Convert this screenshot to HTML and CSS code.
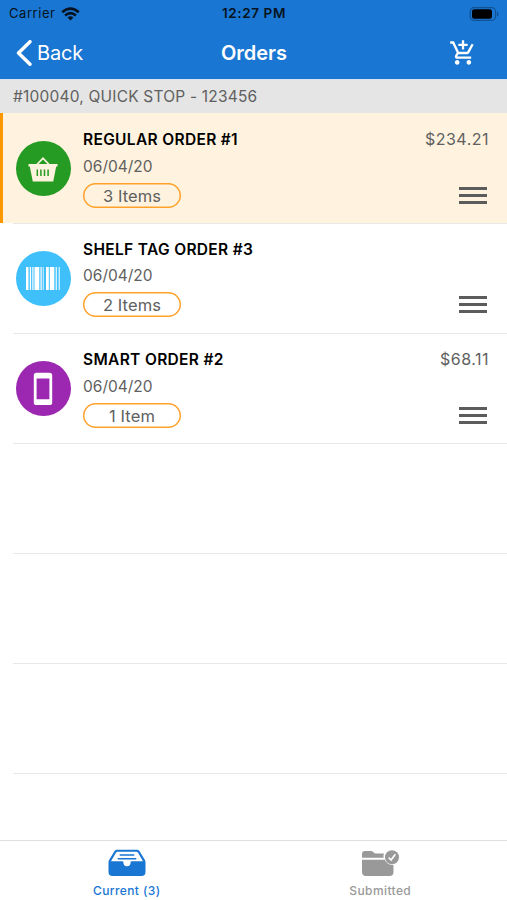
FILE: index.html
```html
<!DOCTYPE html>
<html lang="en">
<head>
<meta charset="utf-8">
<title>Orders</title>
<link rel="stylesheet" href="styles.css">
</head>
<body>
<div class="app">
  <header class="header">
    <div class="status">
      <div class="carrier"><span>Carrier</span>
        <svg class="wifi" width="19" height="14" viewBox="0 0 19 14" fill="none" stroke="#071320" stroke-width="2.6"><path d="M1.2 5.2Q9.5-1.8 17.8 5.2M4.1 8.4Q9.5 3.8 14.9 8.4"/><path d="M9.5 13.5 6.5 10.4Q9.5 8 12.5 10.4Z" fill="#071320" stroke="none"/></svg>
      </div>
      <div class="time">12:27 PM</div>
      <svg class="battery" width="30" height="14" viewBox="0 0 30 14"><rect x="1.2" y=".7" width="25.4" height="12.6" rx="3.8" fill="none" stroke="#125293" stroke-width="1.2"/><rect x="3" y="2.2" width="20" height="9.6" rx="2.4" fill="#000"/><path d="M28 4.5Q29.6 5.5 29.6 7T28 9.5Z" fill="#125293"/></svg>
    </div>
    <nav class="nav">
      <a class="back"><svg width="16" height="26" viewBox="0 0 16 26"><path d="M14 1.7 2.5 13 14 24.3" fill="none" stroke="#fff" stroke-width="3.4" stroke-linecap="round" stroke-linejoin="round"/></svg><span>Back</span></a>
      <h1 class="title">Orders</h1>
      <svg class="cart" width="28" height="28" viewBox="0 0 24 24" fill="#fff"><path d="M11 9h2V6h3V4h-3V1h-2v3H8v2h3v3zm-4 9c-1.1 0-1.99.9-1.99 2S5.9 22 7 22s2-.9 2-2-.9-2-2-2zm10 0c-1.1 0-1.99.9-1.99 2s.89 2 1.99 2 2-.9 2-2-.9-2-2-2zm-9.83-3.25l.03-.12.9-1.63h7.45c.75 0 1.41-.41 1.75-1.03l3.86-7.01L19.42 4h-.01l-1.1 2-2.76 5H8.53l-.13-.27L6.16 6l-.95-2-.94-2H1v2h2l3.6 7.59-1.35 2.45c-.16.28-.25.61-.25.96 0 1.1.9 2 2 2h12v-2H7.42c-.13 0-.25-.11-.25-.25z"/></svg>
    </nav>
  </header>
  <div class="account">#100040, QUICK STOP - 123456</div>
  <main class="list">
    <article class="row selected">
      <div class="avatar green"><svg width="30" height="28" viewBox="0 0 30 28"><path d="M8 10.500 15 3.200l7 7.300" fill="none" stroke="#fff3df" stroke-width="1.800"/><path d="M.5 9h29v2.600h-1.300L25.200 26.500H4.800L1.800 11.600H.5Z" fill="#fff3df"/><path d="M9.300 14.500V21M12.900 14.500V21M16.500 14.500V21M20.100 14.500V21" stroke="#269b24" stroke-width="1.500"/></svg></div>
      <div class="info"><h2>REGULAR ORDER #1</h2><time>06/04/20</time><span class="pill">3 Items</span></div>
      <div class="side"><span class="price">$234.21</span><i class="handle"></i></div>
    </article>
    <article class="row compact">
      <div class="avatar cyan"><svg width="34" height="23" viewBox="0 0 34 23" fill="#fff"><path d="M0 0h2.500v23H0zM3.800 0h1.300v23H3.800zM6.300 0h1.200v23H6.300zM8.500 0h4.800v23H8.500zM14.500 0h1.200v23h-1.200zM16.800 0h.8v23h-.8zM20 0h2.800v23H20zM23.800 0h4.500v23h-4.500zM29.700 0h1.100v23h-1.100zM32.700 0h1v23h-1z"/></svg></div>
      <div class="info"><h2>SHELF TAG ORDER #3</h2><time>06/04/20</time><span class="pill">2 Items</span></div>
      <div class="side"><span class="price"></span><i class="handle"></i></div>
    </article>
    <article class="row">
      <div class="avatar purple"><svg width="20" height="34" viewBox="0 0 20 34"><path fill="#fff" fill-rule="evenodd" d="M3.500.7h13a2.700 2.700 0 0 1 2.700 2.700v27a2.700 2.700 0 0 1-2.700 2.700h-13a2.700 2.700 0 0 1-2.700-2.700v-27A2.700 2.700 0 0 1 3.500.7ZM3.600 6.500v20.800h12.800V6.500Z"/></svg></div>
      <div class="info"><h2>SMART ORDER #2</h2><time>06/04/20</time><span class="pill">1 Item</span></div>
      <div class="side"><span class="price">$68.11</span><i class="handle"></i></div>
    </article>
    <div class="row"></div>
    <div class="row"></div>
    <div class="row"></div>
    <div class="row"></div>
  </main>
  <nav class="tabs">
    <a class="tab active"><svg width="38" height="28" viewBox="0 0 38 28"><path d="M9 .7h20q1.500 0 2.400 1.200l5.100 8.300q1 1.600 1 3.300V23q0 4-4 4h-29q-4 0-4-4v-9.500q0-1.700 1-3.300L6.600 1.900Q7.500.7 9 .7Z" fill="#1976d2"/><path d="M9.500 2.800h19q.9 0 1.400.8l5.100 8.700H23.600q-1 0-1 1.300 0 3.700-3.600 3.700t-3.600-3.700q0-1.300-1-1.300H3L8.100 3.600q.5-.8 1.400-.8Z" fill="#fff"/><path d="M12.300 6h13.400M10.300 9.700h17.400" stroke="#1976d2" stroke-width="1.600" stroke-linecap="round"/></svg><span>Current (3)</span></a>
    <a class="tab"><svg width="38" height="28" viewBox="0 0 38 28"><path fill="#999" d="M1 8.800V5q0-3 3-3h6q1.200 0 2 .8l1 1q.8.700 2 .7h8Q22 6.800 22.700 8.800ZM1 10.700h22.700q2.300 5.300 8.800 5.300V23q0 4-4 4H5q-4 0-4-4Z"/><circle cx="31" cy="8.200" r="7" fill="#999"/><path d="m27.700 8.700 2.400 2.300 4.200-5.800" fill="none" stroke="#fff" stroke-width="1.600"/></svg><span>Submitted</span></a>
  </nav>
</div>
</body>
</html>
```
FILE: styles.css
```css
* { box-sizing: border-box; }
body { margin: 0; background: #fff; color: #606060; font-family: Inter, "Liberation Sans", sans-serif; }
svg { display: block; flex: none; }
h1, h2 { margin: 0; }
.app { height: 900px; display: flex; flex-direction: column; overflow: hidden; }
.header { height: 79px; flex: none; background: #1976d2; }
.status { height: 27px; display: grid; grid-template-columns: 1fr auto 1fr; align-items: center; padding: 0 8px 0 9px; color: #071320; font-size: 13px; line-height: 27px; }
.carrier { display: flex; align-items: center; gap: 6px; letter-spacing: .55px; }
.time { font-size: 13.5px; font-weight: 600; letter-spacing: .6px; }
.battery { justify-self: end; }
.nav { height: 52px; display: grid; grid-template-columns: 1fr auto 1fr; align-items: center; padding: 0 30px 0 16px; color: #fff; }
.back { display: flex; align-items: center; gap: 5px; font-size: 20px; line-height: 26px; letter-spacing: -.2px; }
.title { margin-left: 15px; font-size: 20px; line-height: 26px; font-weight: 600; letter-spacing: 0; }
.cart { justify-self: end; }
.account { height: 34px; flex: none; padding-left: 13px; background: #e5e5e5; font-size: 15.5px; line-height: 34px; letter-spacing: .2px; border-top: 1px solid #d8e3ee; }
.list { flex: 1; min-height: 0; overflow: hidden; }
.row { height: 110px; display: flex; padding: 0 18px 0 15.5px; background: linear-gradient(#e8e8e8, #e8e8e8) 13px 0 / 100% 1px no-repeat; }
.selected { background: #fff3df; box-shadow: inset 3px 0 #ff9800; }
.avatar { width: 55px; height: 55px; margin: 28px 12.5px 0 0; border-radius: 50%; flex: none; display: flex; align-items: center; justify-content: center; }
.green { background: #269b24; }
.cyan { background: #40c0fb; }
.purple { background: #9c27b0; }
.info { flex: 1; display: flex; flex-direction: column; align-items: flex-start; padding-top: 17px; }
.info h2 { color: #000; font-size: 15.5px; line-height: 20px; font-weight: 600; letter-spacing: .33px; }
.info time { margin-top: 7px; font-size: 15.5px; line-height: 20px; }
.pill { width: 98px; height: 25px; margin-top: 6px; box-shadow: inset 0 0 0 1.5px #ffa12b; border-radius: 13px; text-align: center; font-size: 16.5px; line-height: 26px; letter-spacing: .1px; }
.side { display: flex; flex-direction: column; align-items: flex-end; padding-top: 16px; }
.price { height: 20px; font-size: 16px; line-height: 20px; letter-spacing: .5px; }
.handle { width: 28px; height: 17px; margin: 38px 2px 0 0; border-top: 3px solid #5c5c5c; border-bottom: 3px solid #5c5c5c; background: linear-gradient(#5c5c5c, #5c5c5c) 0 50% / 100% 3px no-repeat; }
.compact time { margin-top: 6px; }
.compact .handle { margin-top: 37px; }
.tabs { height: 60px; flex: none; display: grid; grid-template-columns: 1fr 1fr; background: #fff; border-top: 1px solid #e0e0e0; }
.tab { display: flex; flex-direction: column; align-items: center; padding-top: 8px; color: #999; font-size: 12px; font-weight: 500; line-height: 16px; letter-spacing: .4px; }
.tab span { margin-top: 6px; }
.active { color: #1976d2; }
```
